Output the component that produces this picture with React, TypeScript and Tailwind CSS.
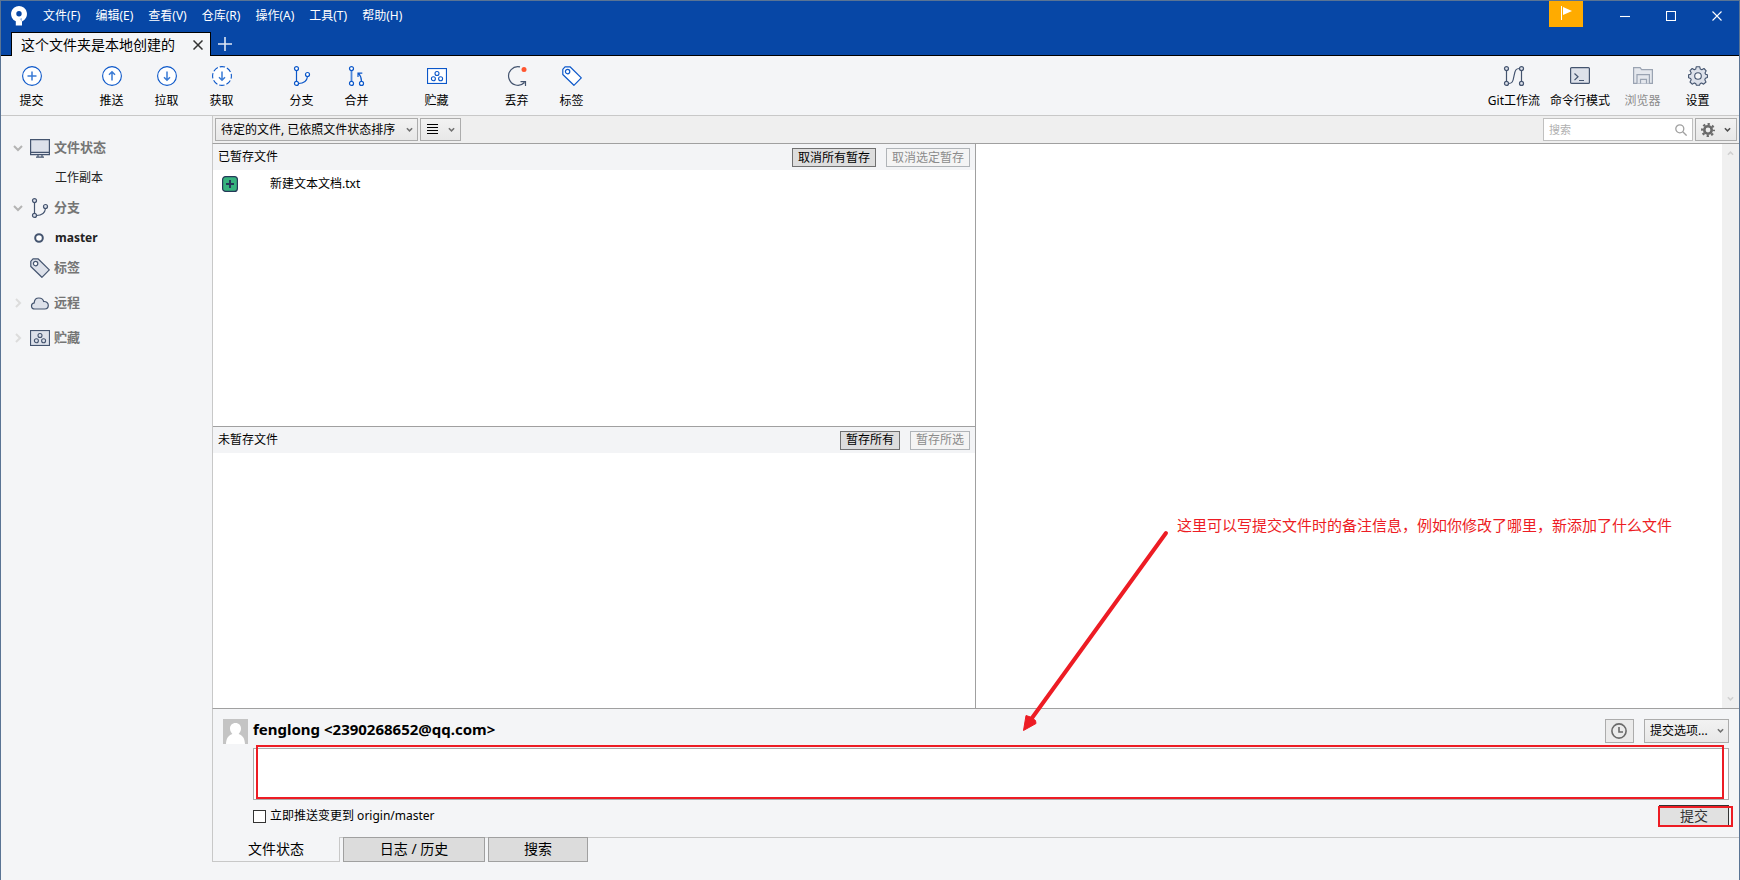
import React, { useState } from 'react';

interface ToolItem {
    label: string;
    icon: React.ReactNode;
    disabled?: boolean;
}

const BLUE = '#0b57c9';
const SLATE = '#44546f';
const FILL = '#dde1ea';

const Chevron: React.FC<{ className?: string }> = ({ className = '' }) => (
    <svg width="7" height="6" viewBox="0 0 8 6" fill="none" stroke="currentColor" strokeWidth="1.7" className={className} aria-hidden="true">
        <path d="M1 1l3 3 3-3" />
    </svg>
);

const CircleIcon: React.FC<{ d: string; dashed?: boolean }> = ({ d, dashed }) => (
    <svg width="20" height="20" viewBox="0 0 20 20" fill="none" stroke={BLUE} aria-hidden="true">
        <circle cx="10" cy="10" r="9.4" fill="#fff" strokeWidth="1.1" strokeDasharray={dashed ? '5.4 2' : undefined} strokeDashoffset={dashed ? 2.7 : undefined} />
        <path d={d} strokeWidth="1.5" stroke="#3a7bd5" />
    </svg>
);

const BranchIcon: React.FC<{ color?: string; fill?: string }> = ({ color = BLUE, fill = '#fff' }) => (
    <svg width="20" height="20" viewBox="0 0 20 20" fill="none" stroke={color} strokeWidth="1.2" aria-hidden="true">
        <path d="M4.5 4.5v11M6.5 17.5c6 0 8.5-3 9-7" />
        <circle cx="4.5" cy="2.6" r="2" fill={fill} />
        <circle cx="4.5" cy="17.4" r="2" fill={fill} />
        <circle cx="15.5" cy="8.5" r="2" fill={fill} />
    </svg>
);

const MergeIcon = () => (
    <svg width="20" height="20" viewBox="0 0 20 20" fill="none" stroke={BLUE} strokeWidth="1.2" aria-hidden="true">
        <path d="M4.5 4.5v11" strokeWidth="1.8" stroke="#4d86d9" />
        <path d="M14.5 15.4c0-4-.8-5.700-3-8M11 11V7.200h4.300" />
        <circle cx="4.5" cy="2.6" r="2" fill="#fff" />
        <circle cx="4.5" cy="17.4" r="2" fill="#fff" />
        <circle cx="14.5" cy="17.4" r="2" fill="#fff" />
    </svg>
);

const StashIcon: React.FC<{ color?: string; fill?: string }> = ({ color = BLUE, fill = '#fff' }) => (
    <svg width="20" height="20" viewBox="0 0 20 20" fill="none" stroke={color} strokeWidth="1.1" aria-hidden="true">
        <rect x=".55" y="2.55" width="18.9" height="14.9" fill={fill} />
        <circle cx="10" cy="7.5" r="2" />
        <circle cx="6.4" cy="12.7" r="2" />
        <circle cx="13.6" cy="12.7" r="2" />
    </svg>
);

const DiscardIcon = () => (
    <svg width="20" height="20" viewBox="0 0 20 20" fill="none" stroke={SLATE} strokeWidth="1.2" aria-hidden="true">
        <path d="M13 .9A9.300 9.300 0 1 0 17.500 16.500M13.500 15.600h5v4.400" />
        <circle cx="17" cy="3.5" r="2.5" fill="#ff5630" stroke="none" />
    </svg>
);

const TagIcon: React.FC<{ color?: string; fill?: string }> = ({ color = BLUE, fill = '#fff' }) => (
    <svg width="20" height="20" viewBox="0 0 20 20" fill="none" stroke={color} strokeWidth="1.2" strokeLinejoin="round" aria-hidden="true">
        <path d="M.8 3.300L3 .8h5l11.300 11.100-7.400 7.400L.8 8.500z" fill={fill} />
        <circle cx="5.6" cy="5.6" r="2.2" fill="#fff" />
    </svg>
);

const GitFlowIcon = () => (
    <svg width="22" height="20" viewBox="0 0 22 20" fill="none" stroke={SLATE} strokeWidth="1.2" aria-hidden="true">
        <path d="M3.500 4.500v11M18.500 4.500v11M5.500 17.500c3.500 0 4.500-1.500 5.500-7.500s2-7.500 5.500-7.500" />
        <circle cx="3.5" cy="2.6" r="2" fill={FILL} />
        <circle cx="3.5" cy="17.4" r="2" fill={FILL} />
        <circle cx="18.5" cy="2.6" r="2" fill={FILL} />
        <circle cx="18.5" cy="17.4" r="2" fill={FILL} />
    </svg>
);

const TerminalIcon = () => (
    <svg width="20" height="20" viewBox="0 0 20 20" fill="none" stroke={SLATE} strokeWidth="1.2" aria-hidden="true">
        <rect x=".6" y="1.6" width="18.8" height="15.8" rx="1" fill={FILL} />
        <path d="M4.500 7.500l3.500 3.300-3.500 3.300M9 14.500h5" />
    </svg>
);

const ExplorerIcon = () => (
    <svg width="20" height="20" viewBox="0 0 20 20" fill="#e4e7ed" stroke="#9aa3b2" strokeWidth="1.2" aria-hidden="true">
        <path d="M.6 17.400V1.600h6.500l1.500 2h10.800v13.800z" />
        <path d="M4 17.400v-8.800h12.400v8.800M7.500 17.400v-4h6v4" />
    </svg>
);

const GearIcon = () => (
    <svg width="20" height="20" viewBox="0 0 20 20" stroke={SLATE} strokeWidth="1.1" strokeLinejoin="round" aria-hidden="true">
        <path
            d="M8.300.7h3.400l.6 2.400 1.500.7 2.200-1.300 2.200 2.300-1.200 2.100.6 1.300 1.800.6v2.700l-2 .8-.6 1.400 1.200 2.300-2.400 2.200-2-1.200-1.400.6-.7 1.700H8.400l-.7-1.800-1.400-.6-2.100 1.300L2 16l1.200-2.200-.6-1.400-2-.7V8.800l2-.6.6-1.400L2 4.700l2.200-2.200 2.100 1.300 1.400-.7z"
            fill={FILL}
        />
        <circle cx="10" cy="10" r="3.3" fill="#f4f5f7" />
    </svg>
);

const MonitorIcon = () => (
    <svg width="20" height="20" viewBox="0 0 20 20" fill="none" stroke={SLATE} strokeWidth="1.2" aria-hidden="true">
        <path d="M.6 1.600h18.800v15H.6z" fill={FILL} />
        <path d="M.6 14.400h18.800M8 16.600v2.200M12 16.600v2.200M6 19.200h8" />
    </svg>
);

const CloudIcon = () => (
    <svg width="20" height="20" viewBox="0 0 20 20" fill={FILL} stroke={SLATE} strokeWidth="1.2" aria-hidden="true">
        <path d="M4.800 16C2.800 16 1.500 14.800 1.500 13c0-1.700 1-2.800 2.700-3.100C4.400 6.800 6.300 5 8.900 5c2.500 0 4.200 1.300 4.800 3.500 2.700-.2 4.600 1.400 4.600 3.800 0 2.200-1.400 3.700-3.500 3.700z" />
    </svg>
);

const SmallGear = () => (
    <svg width="14" height="14" viewBox="0 0 14 14" fill="none" stroke="#6a6a6a" aria-hidden="true">
        <circle cx="7" cy="7" r="3.7" strokeWidth="2.6" />
        <circle cx="7" cy="7" r="5.9" strokeWidth="2.2" strokeDasharray="2.3 2.334" strokeDashoffset="1.15" />
    </svg>
);

const toolGroups: ToolItem[][] = [
    [{ label: '提交', icon: <CircleIcon d="M5.500 10h9M10 5.500v9" /> }],
    [
        { label: '推送', icon: <CircleIcon d="M10 14.500V6M7 8.700l3-3 3 3" /> },
        { label: '拉取', icon: <CircleIcon d="M10 5.500V14M7 11.300l3 3 3-3" /> },
        { label: '获取', icon: <CircleIcon d="M10 5.500V14M7 11.300l3 3 3-3" dashed /> },
    ],
    [
        { label: '分支', icon: <BranchIcon /> },
        { label: '合并', icon: <MergeIcon /> },
    ],
    [{ label: '贮藏', icon: <StashIcon /> }],
    [
        { label: '丢弃', icon: <DiscardIcon /> },
        { label: '标签', icon: <TagIcon /> },
    ],
];

const rightTools: ToolItem[] = [
    { label: 'Git工作流', icon: <GitFlowIcon /> },
    { label: '命令行模式', icon: <TerminalIcon /> },
    { label: '浏览器', icon: <ExplorerIcon />, disabled: true },
    { label: '设置', icon: <GearIcon /> },
];

const menus = ['文件(F)', '编辑(E)', '查看(V)', '仓库(R)', '操作(A)', '工具(T)', '帮助(H)'];

const ToolButton: React.FC<{ item: ToolItem }> = ({ item }) => (
    <button
        disabled={item.disabled}
        className="flex min-w-[55px] flex-col items-center gap-[5px] px-[5px] pt-[10px] whitespace-nowrap text-black disabled:text-[#8c8c8c]"
    >
        {item.icon}
        <span className="leading-5">{item.label}</span>
    </button>
);

interface SideHeadingProps {
    label: string;
    icon: React.ReactNode;
    state?: 'open' | 'closed';
}

const SideHeading: React.FC<SideHeadingProps> = ({ label, icon, state }) => (
    <button className="flex h-8 w-full items-center text-left text-[13px] font-bold text-[#757575]">
        <span className="flex w-[29px] justify-center pl-1">
            {state && (
                <svg
                    width="10"
                    height="10"
                    viewBox="0 0 10 10"
                    fill="none"
                    strokeWidth="2"
                    className={state === 'open' ? 'stroke-[#b4b4b4]' : '-rotate-90 stroke-[#dcdcdc]'}
                    aria-hidden="true"
                >
                    <path d="M1 3l4 4 4-4" />
                </svg>
            )}
        </span>
        {icon}
        <span className="ml-1">{label}</span>
    </button>
);

const SmallButton: React.FC<{ label: string; disabled?: boolean }> = ({ label, disabled }) => (
    <button
        disabled={disabled}
        className="flex h-[19px] items-center border border-[#707070] bg-[#dddddd] px-[5px] whitespace-nowrap text-black disabled:border-[#b0b4b8] disabled:bg-[#f4f4f4] disabled:text-[#8b8b8b]"
    >
        {label}
    </button>
);

interface FilePanelProps {
    title: string;
    all: string;
    selected: string;
    children?: React.ReactNode;
}

const FilePanel: React.FC<FilePanelProps> = ({ title, all, selected, children }) => (
    <section className="flex min-h-0 flex-1 flex-col bg-white">
        <header className="flex h-[26px] shrink-0 items-center justify-between bg-[#f3f4f6] px-[5px]">
            <h2>{title}</h2>
            <div className="flex gap-[10px] pt-px">
                <SmallButton label={all} />
                <SmallButton label={selected} disabled />
            </div>
        </header>
        {children}
    </section>
);

const App: React.FC = () => {
    const [message, setMessage] = useState('');
    const [search, setSearch] = useState('');
    const [pushNow, setPushNow] = useState(false);

    return (
        <div
            lang="zh-CN"
            className="relative flex h-screen flex-col overflow-hidden border-x border-t border-[#5a7494] bg-[#f4f5f7] font-['Noto_Sans','Noto_Sans_CJK_SC',sans-serif] text-xs text-black"
        >
            <header className="shrink-0 border-b border-black bg-[#0747a6] text-white">
                <div className="flex h-[31px] items-start justify-between">
                    <div className="flex h-[30px] items-center pl-[10px]">
                        <svg width="16" height="20" viewBox="0 0 16 20" aria-label="Sourcetree" role="img">
                            <path d="M8 0a8 8 0 0 0-3.200 15.300V19.500h6.200v-4.100A8 8 0 0 0 8 0z" fill="#fff" />
                            <path d="M11 15.500l-2.500-2.700A5 5 0 0 0 11 12z" fill="#a9c1e6" />
                            <circle cx="8" cy="7.8" r="2.7" fill="#0747a6" />
                        </svg>
                        <nav className="ml-4 flex gap-[15px]">
                            {menus.map(menu => (
                                <button key={menu} className="whitespace-nowrap">{menu}</button>
                            ))}
                        </nav>
                    </div>
                    <div className="flex items-start">
                        <button aria-label="通知" className="mr-[18px] flex h-[26px] w-[34px] justify-center bg-[#ffab00] pt-[5px]">
                            <svg width="12" height="14" viewBox="0 0 12 14" fill="#fff" aria-hidden="true">
                                <path d="M1 0h1v14H1zM3 1l9 4-9 4z" />
                            </svg>
                        </button>
                        {[
                            { label: '最小化', d: 'M0 5.500h10' },
                            { label: '最大化', d: 'M.5.5h9v9h-9z' },
                            { label: '关闭', d: 'M.5.5l9 9M9.500.5l-9 9' },
                        ].map(btn => (
                            <button key={btn.label} aria-label={btn.label} className="-mr-px ml-px flex h-[30px] w-[46px] items-center justify-center">
                                <svg width="10" height="10" viewBox="0 0 10 10" fill="none" stroke="#fff" strokeWidth="1.1" aria-hidden="true">
                                    <path d={btn.d} />
                                </svg>
                            </button>
                        ))}
                    </div>
                </div>
                <div className="flex h-[23px] pl-[10px]">
                    <div className="-mb-px flex h-6 items-center border border-b-0 border-black bg-[#f4f5f7] pr-[7px] pl-[9px] text-sm text-black">
                        <span className="whitespace-nowrap">这个文件夹是本地创建的</span>
                        <button aria-label="关闭标签页" className="ml-[18px]">
                            <svg width="10" height="10" viewBox="0 0 10 10" stroke="#333" strokeWidth="1.5" aria-hidden="true">
                                <path d="M.5.5l9 9M9.500.5l-9 9" />
                            </svg>
                        </button>
                    </div>
                    <button aria-label="新建标签页" className="ml-[7px]">
                        <svg width="14" height="14" viewBox="0 0 14 14" stroke="#dfe8f6" strokeWidth="1.6" aria-hidden="true">
                            <path d="M7 0v14M0 7h14" />
                        </svg>
                    </button>
                </div>
            </header>

            <div className="flex h-[60px] shrink-0 items-start justify-between border-b border-[#c8c8c8] pr-[14px] pl-[3px]">
                <div className="flex gap-[25px]">
                    {toolGroups.map(group => (
                        <div key={group[0].label} className="flex">
                            {group.map(item => <ToolButton key={item.label} item={item} />)}
                        </div>
                    ))}
                </div>
                <div className="flex">
                    {rightTools.map(item => <ToolButton key={item.label} item={item} />)}
                </div>
            </div>

            <div className="flex min-h-0 flex-1">
                <aside className="w-[211px] shrink-0 pt-4">
                    <SideHeading label="文件状态" icon={<MonitorIcon />} state="open" />
                    <button className="flex h-7 w-full items-center pl-[54px] text-[#222]">工作副本</button>
                    <SideHeading label="分支" icon={<BranchIcon color={SLATE} fill={FILL} />} state="open" />
                    <button className="flex h-7 w-full items-center pl-[33px] font-bold text-[#222]">
                        <svg width="10" height="10" viewBox="0 0 10 10" fill="#fff" stroke={SLATE} strokeWidth="2" aria-hidden="true">
                            <circle cx="5" cy="5" r="3.8" />
                        </svg>
                        <span className="ml-[11px]">master</span>
                    </button>
                    <div className="flex flex-col gap-[3px]">
                        <SideHeading label="标签" icon={<TagIcon color={SLATE} fill={FILL} />} />
                        <SideHeading label="远程" icon={<CloudIcon />} state="closed" />
                        <SideHeading label="贮藏" icon={<StashIcon color={SLATE} fill={FILL} />} state="closed" />
                    </div>
                </aside>

                <main className="flex min-w-0 flex-1 flex-col">
                    <div className="flex h-7 shrink-0 items-center justify-between border-b border-l border-b-[#a0a0a0] border-l-[#c8c8c8] bg-[#efefef] pr-[2px] pl-[2px]">
                        <div className="flex gap-[2px]">
                            <label className="relative flex items-center">
                                <select
                                    aria-label="文件排序"
                                    className="h-[23px] w-[203px] appearance-none border border-[#acacac] bg-linear-to-b from-[#f2f2f2] to-[#e8e8e8] pl-[5px]"
                                >
                                    <option>待定的文件, 已依照文件状态排序</option>
                                </select>
                                <Chevron className="pointer-events-none absolute right-[5px] text-[#707070]" />
                            </label>
                            <button aria-label="视图" className="flex h-[23px] w-[41px] items-center justify-between border border-[#acacac] bg-linear-to-b from-[#f2f2f2] to-[#e8e8e8] px-[5px]">
                                <svg width="12" height="11" viewBox="0 0 12 11" stroke="#000" aria-hidden="true">
                                    <path d="M1 .5h11M1 3.500h11M1 6.500h11M1 9.500h11" />
                                </svg>
                                <Chevron className="text-[#707070]" />
                            </button>
                        </div>
                        <div className="flex gap-[2px]">
                            <label className="relative flex items-center">
                                <input
                                    type="text"
                                    aria-label="搜索"
                                    placeholder="搜索"
                                    value={search}
                                    onChange={e => setSearch(e.target.value)}
                                    className="h-[23px] w-[150px] border border-[#c0c0c0] bg-white pr-6 pl-[5px] text-[11px] outline-none placeholder:text-[#b0b0b0]"
                                />
                                <svg width="12" height="12" viewBox="0 0 12 12" fill="none" stroke="#a0a0a0" strokeWidth="1.3" className="pointer-events-none absolute right-[6px]" aria-hidden="true">
                                    <circle cx="4.8" cy="4.8" r="4" />
                                    <path d="M7.800 7.800l3.800 3.800" />
                                </svg>
                            </label>
                            <button aria-label="选项" className="flex h-[23px] w-[42px] items-center justify-between border border-[#acacac] bg-linear-to-b from-[#f2f2f2] to-[#e8e8e8] px-[5px]">
                                <SmallGear />
                                <Chevron className="text-[#505050]" />
                            </button>
                        </div>
                    </div>

                    <div className="flex min-h-0 flex-1 border-b border-l border-b-[#a0a0a0] border-l-[#c8c8c8]">
                        <div className="flex w-1/2 shrink-0 flex-col border-r border-[#a0a0a0]">
                            <FilePanel title="已暂存文件" all="取消所有暂存" selected="取消选定暂存">
                                <ul>
                                    <li className="flex h-7 items-center pl-[9px]">
                                        <svg width="16" height="16" viewBox="0 0 16 16" aria-hidden="true">
                                            <rect x=".6" y=".6" width="14.8" height="14.8" rx="3" fill="#36b37e" stroke="#253858" strokeWidth="1.2" />
                                            <path d="M4 8h8M8 4v8" stroke="#253858" strokeWidth="2" />
                                        </svg>
                                        <span className="ml-8">新建文本文档.txt</span>
                                    </li>
                                </ul>
                            </FilePanel>
                            <div className="h-px bg-[#a0a0a0]" />
                            <FilePanel title="未暂存文件" all="暂存所有" selected="暂存所选" />
                        </div>
                        <div className="flex-1 bg-white" />
                        <div className="flex w-[17px] flex-col items-center justify-between bg-[#f0f0f0] py-[6px] text-[#d0d0d0]">
                            <Chevron className="rotate-180" />
                            <Chevron />
                        </div>
                    </div>

                    <form className="border-l border-[#c8c8c8] p-[10px]" onSubmit={e => e.preventDefault()}>
                        <div className="flex h-[25px] items-start justify-between">
                            <div className="flex items-start">
                                <svg width="25" height="25" viewBox="0 0 25 25" aria-hidden="true">
                                    <path d="M0 0h25v25H0z" fill="#c4c4c4" />
                                    <path d="M12.500 4c3.400 0 5.500 2.400 5.500 5.600 0 2.300-1 4.200-2.400 5.400 3.800 1.200 6.200 4.200 6.400 10H3c.2-5.800 2.600-8.800 6.400-10C8 13.800 7 11.900 7 9.600 7 6.400 9.100 4 12.500 4z" fill="#fff" />
                                </svg>
                                <span className="ml-[5px] text-[15px] leading-5 font-bold">fenglong &lt;2390268652@qq.com&gt;</span>
                            </div>
                            <div className="flex gap-[10px]">
                                <button type="button" aria-label="历史提交信息" className="flex h-6 w-[29px] items-center justify-center border border-[#acacac] bg-[#ebebeb]">
                                    <svg width="17" height="16" viewBox="0 0 17 16" fill="none" stroke="#6a6a6a" strokeWidth="1.6" aria-hidden="true">
                                        <circle cx="8" cy="8" r="7.1" />
                                        <path d="M8 4v5h4" />
                                    </svg>
                                </button>
                                <label className="relative flex items-center">
                                    <select
                                        aria-label="提交选项"
                                        className="h-6 w-[85px] appearance-none border border-[#acacac] bg-linear-to-b from-[#f2f2f2] to-[#e8e8e8] pl-[5px]"
                                    >
                                        <option>提交选项...</option>
                                    </select>
                                    <Chevron className="pointer-events-none absolute right-[5px] text-[#707070]" />
                                </label>
                            </div>
                        </div>
                        <div className="relative mt-1 ml-[30px]">
                            <textarea
                                aria-label="提交信息"
                                value={message}
                                onChange={e => setMessage(e.target.value)}
                                className="block h-[52px] w-full resize-none border border-[#acacac] bg-white p-1 outline-none"
                            />
                            <div className="pointer-events-none absolute -top-[3px] right-[5px] bottom-px left-[3px] border-2 border-[#ed1c24]" />
                        </div>
                        <div className="mt-[5px] ml-[30px] flex h-[22px] items-center justify-between">
                            <label className="flex items-center gap-1">
                                <input
                                    type="checkbox"
                                    checked={pushNow}
                                    onChange={e => setPushNow(e.target.checked)}
                                    className="size-[13px] appearance-none border border-[#333] bg-white checked:bg-[#0747a6]"
                                />
                                立即推送变更到 origin/master
                            </label>
                            <div className="relative">
                                <button type="submit" className="block h-[22px] w-[70px] border border-[#333] bg-[#e1e1e1] text-sm leading-5 text-[#333]">提交</button>
                                <div className="pointer-events-none absolute top-px -right-1 bottom-0 -left-px border-2 border-[#ed1c24]" />
                            </div>
                        </div>
                    </form>

                    <div className="flex h-[25px] shrink-0 text-sm leading-5">
                        <button className="w-32 border-r border-b border-l border-[#c8c8c8] pb-px">文件状态</button>
                        <div className="flex flex-1 gap-[3px] border-t border-[#c8c8c8] pl-[3px]">
                            <button className="-mt-px h-[25px] w-[142px] border border-[#a0a0a0] bg-[#dcdcdc] pb-px">日志 / 历史</button>
                            <button className="-mt-px h-[25px] w-[100px] border border-[#a0a0a0] bg-[#dcdcdc] pb-px">搜索</button>
                        </div>
                    </div>
                </main>
            </div>
            <div className="h-[18px] shrink-0" />

            {/* red note with its arrow, drawn over the window */}
            <div className="pointer-events-none absolute bottom-[148px] left-[1021px] flex items-start text-[#ed1c24]">
                <svg width="148" height="202" viewBox="0 0 148 202" aria-hidden="true">
                    <path d="M144 3L10 188" stroke="currentColor" strokeWidth="4" strokeLinecap="round" />
                    <path d="M1.500 200.500L4 185.500l4.500 1.500 5 3.500.5 3z" fill="currentColor" stroke="currentColor" />
                </svg>
                <p className="-mt-[15px] ml-[7px] text-[15px] leading-5 whitespace-nowrap">这里可以写提交文件时的备注信息，例如你修改了哪里，新添加了什么文件</p>
            </div>
        </div>
    );
};

export default App;
